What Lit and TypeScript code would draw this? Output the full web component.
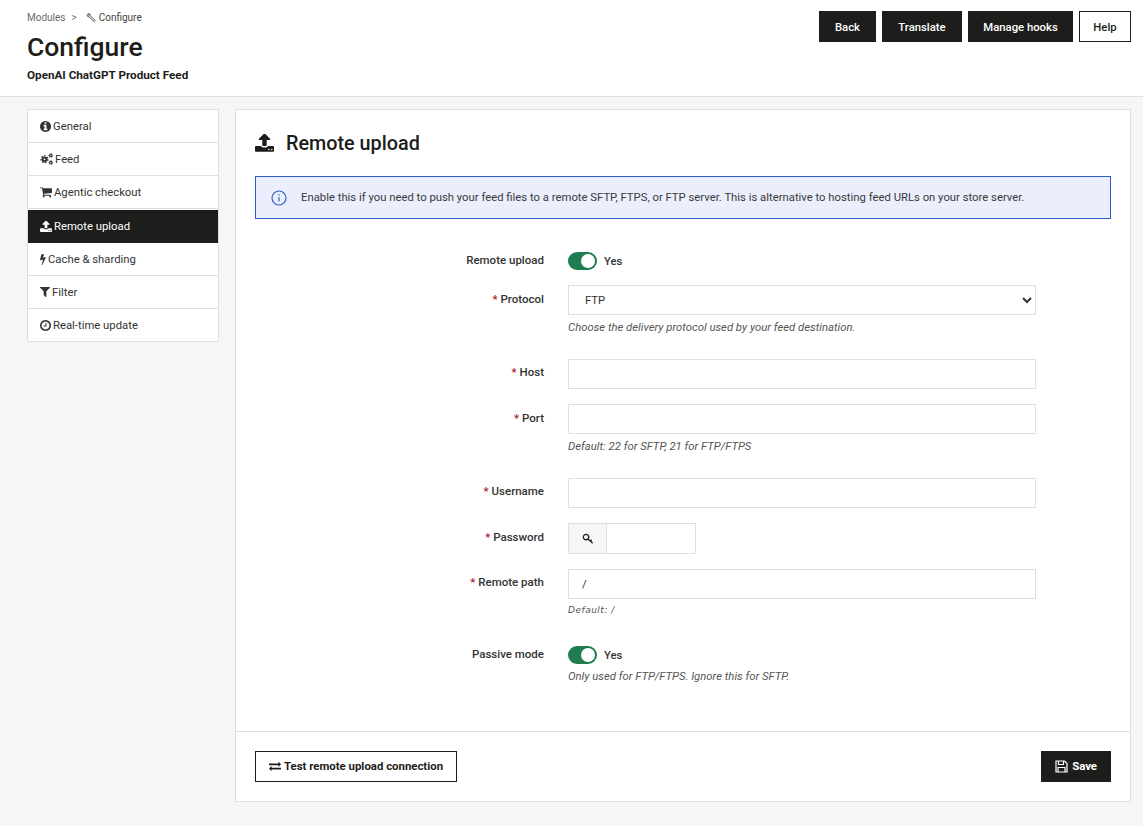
import { LitElement, html, css, svg } from "lit";
import { customElement } from "lit/decorators.js";

const FA = {
  info: "M1152 1376v-160q0-14-9-23t-23-9h-96v-512q0-14-9-23t-23-9h-320q-14 0-23 9t-9 23v160q0 14 9 23t23 9h96v320h-96q-14 0-23 9t-9 23v160q0 14 9 23t23 9h448q14 0 23-9t9-23zm-128-896v-160q0-14-9-23t-23-9h-192q-14 0-23 9t-9 23v160q0 14 9 23t23 9h192q14 0 23-9t9-23zm640 416q0 209-103 385.500t-279.500 279.500-385.500 103-385.500-103-279.500-279.500-103-385.500 103-385.500 279.500-279.500 385.500-103 385.500 103 279.500 279.500 103 385.500z",
  cart: "M704 1536q0 52-38 90t-90 38-90-38-38-90 38-90 90-38 90 38 38 90zm896 0q0 52-38 90t-90 38-90-38-38-90 38-90 90-38 90 38 38 90zm128-1088v512q0 24-16.500 42.500t-40.500 21.500l-1044 122q13 60 13 70 0 16-24 64h920q26 0 45 19t19 45-19 45-45 19h-1024q-26 0-45-19t-19-45q0-11 8-31.500t16-36 21.500-40 15.500-29.500l-177-823h-204q-26 0-45-19t-19-45 19-45 45-19h256q16 0 28.500 6.500t19.500 15.500 13 24.500 8 26 5.500 29.500 4.500 26h1201q26 0 45 19t19 45z",
  upload: "M1344 1472q0-26-19-45t-45-19-45 19-19 45 19 45 45 19 45-19 19-45zm256 0q0-26-19-45t-45-19-45 19-19 45 19 45 45 19 45-19 19-45zm128-224v320q0 40-28 68t-68 28h-1472q-40 0-68-28t-28-68v-320q0-40 28-68t68-28h427q21 56 70.500 92t110.500 36h256q61 0 110.500-36t70.500-92h427q40 0 68 28t28 68zm-325-648q-17 40-59 40h-256v448q0 26-19 45t-45 19h-256q-26 0-45-19t-19-45v-448h-256q-42 0-59-40-17-39 14-69l448-448q18-19 45-19t45 19l448 448q31 30 14 69z",
  bolt: "M1303 608q18 20 7 44l-540 1157q-13 25-42 25-4 0-14-2-17-5-25.500-19t-4.500-30l197-808-406 101q-4 1-12 1-18 0-31-11-18-15-13-39l201-825q4-14 16-23t28-9h328q19 0 32 12.500t13 29.500q0 8-5 18l-171 463 396-98q8-2 12-2 19 0 34 15z",
  filter: "M1595 295q17 41-14 70l-493 493v742q0 42-39 59-13 5-25 5-27 0-45-19l-256-256q-19-19-19-45v-486l-493-493q-31-29-14-70 17-39 59-39h1280q42 0 59 39z",
  clock: "M1024 544v448q0 14-9 23t-23 9h-320q-14 0-23-9t-9-23v-64q0-14 9-23t23-9h224v-352q0-14 9-23t23-9h64q14 0 23 9t9 23zm416 352q0-148-73-273t-198-198-273-73-273 73-198 198-73 273 73 273 198 198 273 73 273-73 198-198 73-273zm224 0q0 209-103 385.500t-279.500 279.500-385.500 103-385.500-103-279.500-279.500-103-385.500 103-385.500 279.500-279.500 385.500-103 385.500 103 279.500 279.500 103 385.500z",
  exchange: "M1792 1184v192q0 13-9.500 22.500t-22.500 9.500h-1376v192q0 13-9.500 22.500t-22.500 9.500q-12 0-24-10l-319-320q-9-9-9-22 0-14 9-23l320-320q9-9 23-9 13 0 22.500 9.500t9.500 22.500v192h1376q13 0 22.500 9.500t9.500 22.500zm0-544q0 14-9 23l-320 320q-9 9-23 9-13 0-22.500-9.500t-9.500-22.500v-192h-1376q-13 0-22.500-9.500t-9.500-22.500v-192q0-13 9.500-22.500t22.500-9.500h1376v-192q0-14 9-23t23-9q12 0 24 10l319 319q9 9 9 23z",
};

// the box is cropped to the drawn glyph so that text can follow it at a measured distance
const fa = (d: string, w: number, h: number, box: string) =>
  html`<svg class="ico" width=${w} height=${h} viewBox=${box} fill="currentColor"><path d=${d}></path></svg>`;

const gear = (cx: number, cy: number, r: number, sw: number) => svg`
  <circle cx=${cx} cy=${cy} r=${r} fill="none" stroke="currentColor" stroke-width=${sw}></circle>
  <circle cx=${cx} cy=${cy} r=${r + sw * 0.72} fill="none" stroke="currentColor" stroke-width=${sw * 0.7}
    stroke-dasharray=${(2 * Math.PI * (r + sw * 0.72)) / 14}></circle>`;

const cogs = html`<svg class="ico" width="13" height="12" viewBox="0 0 13 12">
  ${gear(4.5, 6.3, 1.9, 2)} ${gear(10.8, 2.6, 1.2, 1.1)} ${gear(10.8, 9.6, 1.2, 1.1)}
</svg>`;

const wrench = html`<svg class="ico" width="10" height="10" viewBox="0 0 10 10" fill="none" stroke="currentColor">
  <path d="M1.200 1.600 2.500 2.900 3.400 2.100 2.100 .8C3.300 .3 4.500 1.100 4.300 2.700L8.800 7.200C9.300 7.700 8.300 8.900 7.700 8.300L3.100 3.800C1.900 4.200 .8 3 1.200 1.600Z" stroke-width=".9"></path>
</svg>`;

const key = html`<svg class="ico" width="12" height="12" viewBox="0 0 11 11" fill="none" stroke="currentColor">
  <circle cx="3.700" cy="3.700" r="2.500" stroke-width="1.200"></circle>
  <path d="M5.500 5.500 9.800 9.300M7.500 7.400 8.900 6.300" stroke-width="1.200"></path>
</svg>`;

const floppy = html`<svg class="ico" width="13" height="13" viewBox="0 0 13 13" fill="none" stroke="currentColor" stroke-width="1.200">
  <path d="M1 1h8.500L12 3.500V12H1Z"></path>
  <path d="M3.500 1v3.500h5V1M3 12V7.500h7V12"></path>
</svg>`;

const NAV = [
  { icon: fa(FA.info, 11, 11, "128 128 1536 1536"), label: "General", cls: "" },
  { icon: cogs, label: "Feed", cls: "" },
  { icon: fa(FA.cart, 12, 11, "64 256 1664 1408"), label: "Agentic checkout", cls: "" },
  { icon: fa(FA.upload, 12, 11, "64 128 1664 1536"), label: "Remote upload", cls: "on" },
  { icon: fa(FA.bolt, 6, 11, "430 130 890 1680"), label: "Cache & sharding", cls: "" },
  { icon: fa(FA.filter, 10, 10, "190 250 1412 1412"), label: "Filter", cls: "" },
  { icon: fa(FA.clock, 11, 11, "128 128 1536 1536"), label: "Real-time update", cls: "" },
];

@customElement("app-root")
export class AppRoot extends LitElement {
  static styles = css`
    :host {
      display: block;
      min-height: 826px;
      background: #f6f6f6;
      color: #1d1d1b;
      font-family: Roboto, "Liberation Sans", sans-serif;
      font-size: 11.3px;
    }
    * {
      box-sizing: border-box;
    }
    .ico {
      flex: none;
    }

    .top {
      height: 97px;
      background: #fff;
      border-bottom: 1px solid #e0e0e0;
      padding: 11px 12px 0 27px;
      display: flex;
      justify-content: space-between;
    }
    .crumbs {
      display: flex;
      align-items: center;
      height: 13px;
      font-size: 10px;
      color: #6c6c6c;
    }
    .crumbs .sep {
      margin: 0 9px 0 6px;
    }
    .crumbs .cur {
      display: flex;
      align-items: center;
      gap: 3px;
      color: #444;
    }
    h1 {
      margin: 7px 0 0;
      font-size: 26.500px;
      line-height: 32px;
      font-weight: 500;
    }
    .sub {
      margin-top: 5px;
      font-size: 11.700px;
      line-height: 14px;
      font-weight: 700;
    }
    .actions {
      display: flex;
      gap: 6px;
      height: 31px;
    }
    .btn {
      display: inline-flex;
      align-items: center;
      justify-content: center;
      gap: 3px;
      height: 31px;
      padding: 1px 0 0;
      border: 1px solid #1d1d1b;
      background: #1d1d1b;
      color: #fff;
      font: 500 11.300px Roboto, "Liberation Sans", sans-serif;
    }
    .btn.ghost {
      background: #fff;
      color: #1d1d1b;
    }
    .actions .back {
      width: 57px;
    }
    .actions .translate {
      width: 80px;
    }
    .actions .hooks {
      width: 105px;
    }
    .actions .help-btn {
      width: 52px;
    }

    .page {
      display: grid;
      grid-template-columns: 192px 896px;
      gap: 16px;
      padding: 12px 0 0 27px;
      align-items: start;
    }

    .nav {
      background: #fff;
      border: 1px solid #e0e0e0;
      display: flex;
      flex-direction: column;
    }
    .nav a {
      height: 33px;
      display: flex;
      align-items: center;
      gap: 2px;
      padding-left: 12px;
      border-bottom: 1px solid #e0e0e0;
      color: #333;
    }
    .nav a:last-child {
      border-bottom: 0;
      height: 32px;
    }
    .nav a.on {
      height: 34px;
      background: #1d1d1b;
      color: #fff;
      border-top: 1px solid #fff;
      border-bottom-color: #1d1d1b;
    }

    .panel {
      background: #fff;
      border: 1px solid #e0e0e0;
    }
    .body {
      padding: 19px 19px 48px;
    }
    h2 {
      margin: 0;
      height: 28px;
      display: flex;
      align-items: center;
      gap: 12px;
      font-size: 19.800px;
      font-weight: 500;
    }
    .alert {
      margin-top: 19px;
      height: 43px;
      display: flex;
      align-items: center;
      gap: 14px;
      padding-left: 15px;
      border: 1px solid #2f5fc4;
      background: #ebeefc;
      color: #3a3a3a;
    }
    .alert svg {
      color: #2f5fc4;
    }

    .form {
      margin-top: 33px;
    }
    .row {
      display: grid;
      grid-template-columns: 289px 468px;
      column-gap: 24px;
      margin-bottom: 15px;
    }
    .row.gap {
      margin-bottom: 25px;
    }
    .row.gap-lg {
      margin-bottom: 28px;
    }
    .row.end {
      margin-bottom: 0;
    }
    .row label {
      text-align: right;
      line-height: 16px;
      padding-top: 6px;
      font-size: 11.500px;
      font-weight: 500;
      color: #333;
    }
    .row.flush label {
      padding-top: 5px;
    }
    .row.switch-row label {
      padding-top: 0;
    }
    .req {
      color: #a5222c;
    }
    input,
    select {
      display: block;
      width: 100%;
      height: 30px;
      border: 1px solid #e0e0e0;
      border-radius: 0;
      background: #fff;
      color: #333;
      outline: none;
      padding: 0 13px;
      font: 11.300px Roboto, "Liberation Sans", sans-serif;
    }
    select {
      padding: 0 12px;
    }
    .help {
      margin-top: 6px;
      font-style: italic;
      font-size: 11.300px;
      line-height: 13px;
      color: #555;
    }
    .help.tiny {
      margin-top: 3px;
      line-height: 16px;
      font-family: "DejaVu Sans", sans-serif;
      font-size: 9px;
      letter-spacing: 0.5px;
    }
    .switch {
      display: flex;
      align-items: center;
      gap: 7px;
      height: 18px;
      font-size: 11.300px;
      font-weight: 500;
      color: #333;
    }
    .track {
      width: 29px;
      height: 18px;
      border-radius: 9px;
      background: #1f7d4f;
      display: flex;
      justify-content: flex-end;
      align-items: center;
      padding-right: 2px;
    }
    .knob {
      width: 14px;
      height: 14px;
      border-radius: 50%;
      background: #fff;
    }
    .group {
      display: flex;
      width: 128px;
    }
    .addon {
      flex: none;
      width: 39px;
      height: 31px;
      display: flex;
      align-items: center;
      justify-content: center;
      background: #f6f6f6;
      border: 1px solid #e0e0e0;
    }
    .group input {
      height: 31px;
      border-left: 0;
      min-width: 0;
    }

    .foot {
      height: 70px;
      border-top: 1px solid #e0e0e0;
      padding: 0 19px;
      display: flex;
      align-items: center;
      justify-content: space-between;
    }
    .foot .btn {
      font-weight: 700;
      font-size: 11.400px;
      padding: 0 13px 1px;
    }
    .foot .btn.save {
      gap: 4px;
      padding: 0 13px 1px;
    }
  `;

  private field(label: string, content: unknown, cls = "") {
    return html`<div class="row ${cls}">
      <label><span class="req">*</span> ${label}</label>
      <div>${content}</div>
    </div>`;
  }

  private toggle() {
    return html`<div class="switch">
      <span class="track"><span class="knob"></span></span>Yes
    </div>`;
  }

  render() {
    return html`
      <header class="top">
        <div>
          <div class="crumbs">
            Modules<span class="sep">&gt;</span>
            <span class="cur">${wrench} Configure</span>
          </div>
          <h1>Configure</h1>
          <div class="sub">OpenAI ChatGPT Product Feed</div>
        </div>
        <div class="actions">
          <button class="btn back">Back</button>
          <button class="btn translate">Translate</button>
          <button class="btn hooks">Manage hooks</button>
          <button class="btn ghost help-btn">Help</button>
        </div>
      </header>

      <div class="page">
        <nav class="nav">
          ${NAV.map((n) => html`<a class=${n.cls}>${n.icon}${n.label}</a>`)}
        </nav>

        <section class="panel">
          <div class="body">
            <h2>${fa(FA.upload, 19, 18, "64 128 1664 1536")}Remote upload</h2>
            <div class="alert">
              <svg width="16" height="16" viewBox="0 0 16 16" fill="none" stroke="currentColor" stroke-width="1.200">
                <circle cx="8" cy="8" r="7"></circle>
                <path d="M8 7v4.500M8 4.200v1.300"></path>
              </svg>
              Enable this if you need to push your feed files to a remote SFTP, FTPS, or FTP server. This is alternative to hosting feed URLs on your store server.
            </div>

            <div class="form">
              <div class="row switch-row">
                <label>Remote upload</label>
                ${this.toggle()}
              </div>
              ${this.field(
                "Protocol",
                html`<select><option>FTP</option></select>
                  <div class="help">Choose the delivery protocol used by your feed destination.</div>`,
                "gap"
              )}
              ${this.field("Host", html`<input type="text" />`, "flush")}
              ${this.field(
                "Port",
                html`<input type="text" />
                  <div class="help">Default: 22 for SFTP, 21 for FTP/FTPS</div>`,
                "gap"
              )}
              ${this.field("Username", html`<input type="text" />`, "flush")}
              ${this.field(
                "Password",
                html`<div class="group">
                  <span class="addon">${key}</span><input type="password" />
                </div>`
              )}
              ${this.field(
                "Remote path",
                html`<input type="text" value="/" />
                  <div class="help tiny">Default: /</div>`,
                "gap-lg flush"
              )}
              <div class="row switch-row end">
                <label>Passive mode</label>
                <div>
                  ${this.toggle()}
                  <div class="help">Only used for FTP/FTPS. Ignore this for SFTP.</div>
                </div>
              </div>
            </div>
          </div>
          <div class="foot">
            <button class="btn ghost">${fa(FA.exchange, 12, 12, "0 0 1792 1792")}Test remote upload connection</button>
            <button class="btn save">${floppy} Save</button>
          </div>
        </section>
      </div>
    `;
  }
}
